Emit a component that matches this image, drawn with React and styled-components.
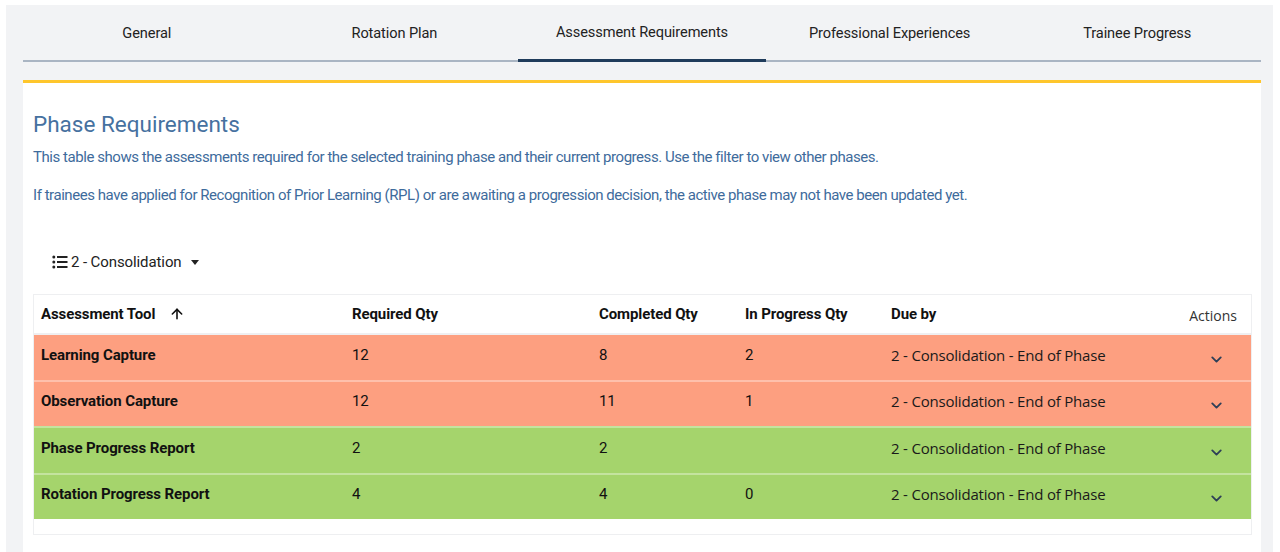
import React from "react";
import styled, { createGlobalStyle } from "styled-components";
import { ArrowUp, ChevronDown } from "lucide-react";

const GlobalStyle = createGlobalStyle`
  html, body { margin: 0; padding: 0; background: #fff; }
  body { font-family: Roboto, "Liberation Sans", Arial, sans-serif; }
  * { box-sizing: border-box; }
`;

const Page = styled.div` padding: 5px 7px 0 6px; height: 552px; overflow: hidden; `;
const Panel = styled.div`
  background: #f2f3f5; height: 547px; padding: 0 12px 0 17px;
  display: flex; flex-direction: column;
`;

const Tabs = styled.div`
  display: grid; grid-template-columns: repeat(5, 1fr);
  height: 57px; border-bottom: 2px solid #aab5c3;
`;
const Tab = styled.div`
  display: flex; align-items: center; justify-content: center;
  padding-top: 1px;
  font-size: 14.6px; color: #222; letter-spacing: -0.1px;
  position: relative;
  ${({ $active }) => $active && `
    padding-top: 0; padding-bottom: 2px;
    &:after { content: ""; position: absolute; left: 0; right: 0; bottom: -2px; height: 3px; background: #1f3b5b; }
  `}
`;

const Card = styled.div`
  margin-top: 18px; flex: 1;
  background: #fff; border-top: 3px solid #fec62c;
  padding: 27px 9px 0 10px;
`;
const Title = styled.h2`
  margin: 0; font-size: 22.5px; font-weight: 400; color: #4671a0; line-height: 28px;
`;
const Text = styled.p`
  margin: ${({ $gap }) => $gap}px 0 0; font-size: 15px; color: #3e6b9c; line-height: 20px;
  letter-spacing: -0.45px;
`;

const Filter = styled.div`
  display: flex; align-items: center; gap: 3px;
  margin: 47px 0 0 19px; height: 20px;
  font-size: 15px; color: #222; letter-spacing: -0.1px;
`;
const Caret = styled.span`
  margin-left: 6px; width: 0; height: 0;
  border-left: 4px solid transparent; border-right: 4px solid transparent; border-top: 5px solid #222;
`;

const Table = styled.div`
  margin-top: 22px; border: 1px solid #eeeff1; padding-bottom: 15px;
`;
const Row = styled.div`
  display: grid; grid-template-columns: 311px 247px 146px 146px 1fr 100px;
  align-items: center;
  height: ${({ $head }) => ($head ? 38 : 46.5)}px;
  background: ${({ $bg }) => $bg || "#fff"};
  border-top: ${({ $first, $head }) => ($head ? "none" : $first ? "2px solid #efeff1" : "2px solid rgba(255,255,255,0.35)")};
`;
const Head = styled.div`
  padding-left: 7px; font-size: 15px; font-weight: 700; color: #111; letter-spacing: -0.1px;
  display: flex; align-items: center; gap: 14px;
  ${({ $right }) => $right && `
    justify-content: flex-end; padding-right: 14px; font-weight: 400; letter-spacing: 0;
    font-family: "Open Sans", "Noto Sans", sans-serif; font-size: 14px; color: #333;
    padding-top: 2px;
  `}
`;
const Cell = styled.div`
  padding-left: 7px; padding-bottom: 5px; font-size: 15px; color: #111; letter-spacing: -0.1px;
  font-weight: ${({ $bold }) => ($bold ? 700 : 400)};
  ${({ $alt }) => $alt && `font-family: "Open Sans", "Noto Sans", sans-serif; font-size: 15px; color: #1a1a1a; letter-spacing: -0.2px;`}
`;
const Action = styled.div`
  display: flex; justify-content: flex-end; padding-right: 26px; padding-top: 4px; color: #2d3f57;
`;

const ListIcon = () => (
  <svg width="16" height="14" viewBox="0 0 16 14">
    {[2, 7, 12].map((y) => (
      <g key={y}>
        <circle cx="1.8" cy={y} r="1.5" fill="#222" />
        <rect x="5" y={y - 1} width="10.5" height="2" fill="#222" />
      </g>
    ))}
  </svg>
);

const tabs = ["General", "Rotation Plan", "Assessment Requirements", "Professional Experiences", "Trainee Progress"];
const RED = "#fd9f80";
const GREEN = "#a5d46c";
const rows = [
  { name: "Learning Capture", req: "12", done: "8", prog: "2", bg: RED },
  { name: "Observation Capture", req: "12", done: "11", prog: "1", bg: RED },
  { name: "Phase Progress Report", req: "2", done: "2", prog: "", bg: GREEN },
  { name: "Rotation Progress Report", req: "4", done: "4", prog: "0", bg: GREEN },
];

export default function App() {
  return (
    <>
      <GlobalStyle />
      <Page>
        <Panel>
          <Tabs>
            {tabs.map((t) => (
              <Tab key={t} $active={t === "Assessment Requirements"}>{t}</Tab>
            ))}
          </Tabs>
          <Card>
            <Title>Phase Requirements</Title>
            <Text $gap={9}>This table shows the assessments required for the selected training phase and their current progress. Use the filter to view other phases.</Text>
            <Text $gap={18}>If trainees have applied for Recognition of Prior Learning (RPL) or are awaiting a progression decision, the active phase may not have been updated yet.</Text>
            <Filter>
              <ListIcon />
              <span>2 - Consolidation</span>
              <Caret />
            </Filter>
            <Table>
              <Row $head>
                <Head>Assessment Tool <ArrowUp size={16} strokeWidth={2.4} /></Head>
                <Head>Required Qty</Head>
                <Head>Completed Qty</Head>
                <Head>In Progress Qty</Head>
                <Head>Due by</Head>
                <Head $right>Actions</Head>
              </Row>
              {rows.map((r, i) => (
                <Row key={r.name} $bg={r.bg} $first={i === 0}>
                  <Cell $bold>{r.name}</Cell>
                  <Cell>{r.req}</Cell>
                  <Cell>{r.done}</Cell>
                  <Cell>{r.prog}</Cell>
                  <Cell $alt>2 - Consolidation - End of Phase</Cell>
                  <Action><ChevronDown size={17} strokeWidth={2.6} /></Action>
                </Row>
              ))}
            </Table>
          </Card>
        </Panel>
      </Page>
    </>
  );
}
